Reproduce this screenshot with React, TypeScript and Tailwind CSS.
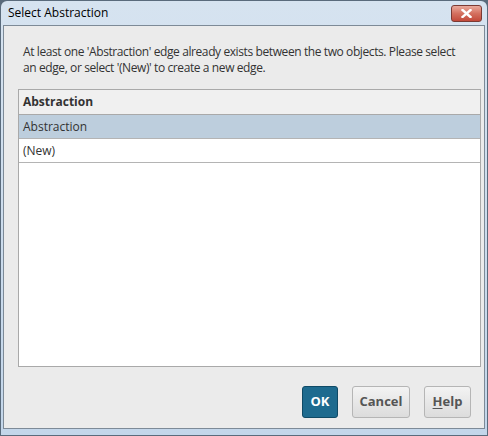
import React from 'react';

const rows = ['Abstraction', '(New)'];

export default function App() {
  return (
    <div
      className="w-[488px] h-[436px] bg-[#5a6b7c] p-px text-[#333]"
      style={{ fontFamily: '"Open Sans", "Noto Sans", sans-serif' }}
    >
      <div className="flex h-full flex-col rounded-t-[6px] bg-gradient-to-b from-[#d6e3f0] to-[#c3d6ea] px-[2px] pb-[6px]">
        {/* Title bar */}
        <div className="flex h-[24px] items-center justify-between pl-[5px] pr-[3px]">
          <span className="text-[12px] text-black">Select Abstraction</span>
          <button className="flex h-[17px] w-[31px] items-center justify-center rounded-[3px] border border-[#7b3a33] bg-gradient-to-b from-[#e9a99c] via-[#d4705f] to-[#c2493a]">
            <svg width="11" height="9" viewBox="0 0 11 9">
              <path d="M1.5 1 L9.5 8 M9.5 1 L1.5 8" stroke="#fff" strokeWidth="2.4" strokeLinecap="square" />
            </svg>
          </button>
        </div>

        {/* Body */}
        <div className="flex flex-1 flex-col border border-[#7d8a97] bg-[#ebebeb] pl-[14px] pr-[3px]">
          <p className="mt-[18px] pl-[5px] pr-[10px] text-[12px] leading-[16px] tracking-[-0.4px]">
            At least one 'Abstraction' edge already exists between the two objects. Please select an edge, or select '(New)' to create a new edge.
          </p>

          {/* List */}
          <div className="mt-[13px] h-[278px] border border-[#a9a9a9] bg-white">
            <div className="flex h-[25px] items-center border-b border-[#a9a9a9] bg-[#f0f0f0] px-[4px] text-[12px] font-bold">
              Abstraction
            </div>
            {rows.map((r, i) => (
              <div
                key={r}
                className={`flex h-[24px] items-center border-b border-[#b4b4b4] px-[4px] text-[12px] ${
                  i === 0 ? 'bg-[#bdcedd]' : 'bg-white'
                }`}
              >
                {r}
              </div>
            ))}
          </div>

          {/* Buttons */}
          <div className="mt-auto mb-[10px] flex justify-end gap-[14px] pr-[10px]">
            <button className="h-[32px] w-[36px] rounded-[3px] border border-[#0f4a66] bg-[#1e6b8f] text-[13px] font-bold text-white">
              OK
            </button>
            <button className="h-[32px] w-[58px] rounded-[3px] border border-[#b5b5b5] bg-gradient-to-b from-[#f3f3f3] to-[#dcdcdc] text-[13px] font-bold text-[#555]">
              Cancel
            </button>
            <button className="h-[32px] w-[47px] rounded-[3px] border border-[#b5b5b5] bg-gradient-to-b from-[#f3f3f3] to-[#dcdcdc] text-[13px] font-bold text-[#555]">
              <span className="underline underline-offset-2">H</span>elp
            </button>
          </div>
        </div>
      </div>
    </div>
  );
}
